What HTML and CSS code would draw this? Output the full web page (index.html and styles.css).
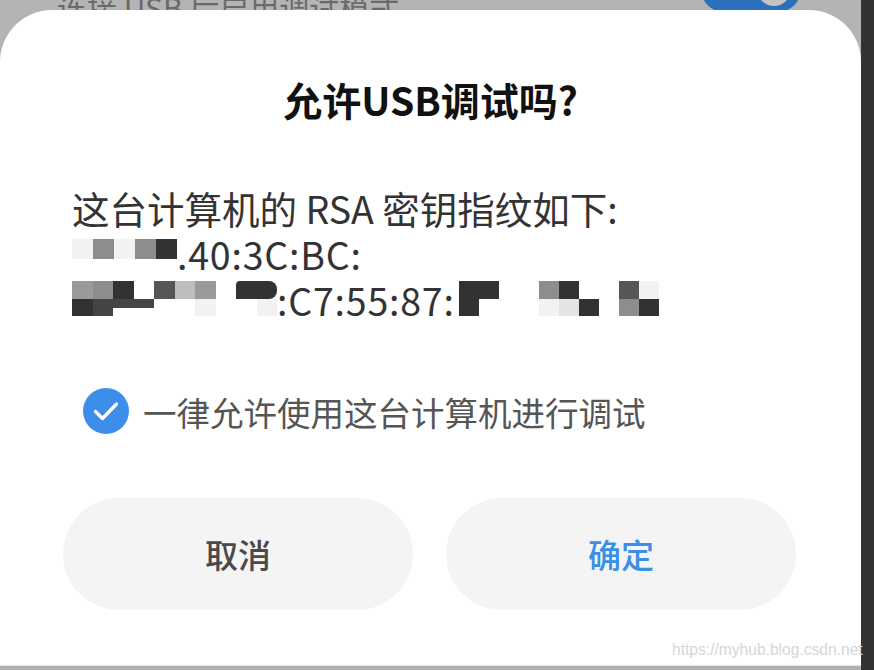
FILE: index.html
```html
<!DOCTYPE html>
<html lang="zh-CN">
<head>
    <meta charset="UTF-8">
    <meta name="viewport" content="width=device-width, initial-scale=1.0">
    <title>允许USB调试吗?</title>
    <link rel="stylesheet" href="styles.css">
</head>
<body>
    <div class="screen">
        <div class="main">
            <div class="behind">
                <span class="behind-text">连接 USB 后启用调试模式</span>
                <span class="toggle"><span class="knob"></span></span>
            </div>
            <div class="dialog">
                <h1 class="title">允许USB调试吗?</h1>
                <div class="message">
                    <p>这台计算机的 RSA 密钥指纹如下:</p>
                    <p><span class="mosaic short">
                        <i class="c1"></i><i class="c5"></i><i class="c1"></i><i class="c5"></i><i class="c9"></i>
                    </span><span class="hex">.40:3C:BC:</span></p>
                    <p><span class="mosaic wide">
                        <i class="c6"></i><i class="c5"></i><i class="c9"></i><i class="c0"></i><i class="c7"></i><i class="c3"></i><i class="c6"></i><i class="c0"></i><i class="c9 r"></i><i class="c9 r2"></i>
                        <i class="c9"></i><i class="c8"></i><i class="c8 half"></i><i class="c8 half"></i><i class="c0"></i><i class="c0"></i><i class="c1"></i><i class="c0"></i><i class="c0"></i><i class="c1"></i>
                    </span><span class="hex">:C7:55:87:</span><span class="mosaic wide after">
                        <i class="c9"></i><i class="c9"></i><i class="c0"></i><i class="c0"></i><i class="c5"></i><i class="c9"></i><i class="c0"></i><i class="c0"></i><i class="c7"></i><i class="c1"></i>
                        <i class="c9"></i><i class="c0"></i><i class="c0"></i><i class="c0"></i><i class="c1"></i><i class="c2"></i><i class="c9"></i><i class="c0"></i><i class="c5"></i><i class="c9"></i>
                    </span></p>
                </div>
                <label class="always">
                    <span class="check">
                        <svg width="48" height="48" viewBox="0 0 48 48">
                            <circle cx="24" cy="24" r="23" fill="#3b8eea"/>
                            <path d="M13.5 24.5 L20.5 31.5 L34.5 17" fill="none" stroke="#fff" stroke-width="3.4" stroke-linecap="round" stroke-linejoin="round"/>
                        </svg>
                    </span>
                    <span class="always-text">一律允许使用这台计算机进行调试</span>
                </label>
                <div class="buttons">
                    <button class="btn">取消</button>
                    <button class="btn primary">确定</button>
                </div>
            </div>
            <div class="bottom-bar"></div>
        </div>
        <div class="side"></div>
        <div class="watermark">https://myhub.blog.csdn.net</div>
    </div>
</body>
</html>
```

FILE: styles.css
```css
body {
    margin: 0;
    font-family: "Noto Sans CJK SC", "Noto Sans", sans-serif;
    background-color: #b4b4b4;
    overflow: hidden;
}
.screen {
    position: relative;
    display: flex;
    width: 874px;
    height: 670px;
}
.main {
    width: 861px;
    display: flex;
    flex-direction: column;
}
.side {
    width: 13px;
    background-color: #333;
}
.behind {
    height: 10px;
    overflow: hidden;
    display: flex;
    justify-content: space-between;
    padding: 0 60px 0 57px;
}
.behind-text {
    font-size: 30px;
    line-height: 30px;
    color: #6a6a6a;
    margin-top: -8px;
    white-space: nowrap;
}
.toggle {
    width: 100px;
    height: 46px;
    margin-top: -34px;
    border-radius: 23px;
    background-color: #2c6fbd;
    display: flex;
    justify-content: flex-end;
    align-items: center;
    padding-right: 10px;
    box-sizing: border-box;
}
.knob {
    width: 34px;
    height: 34px;
    border-radius: 50%;
    background-color: #c4c4c4;
}
.dialog {
    position: relative;
    height: 655px;
    box-sizing: border-box;
    background-color: #fff;
    border-radius: 52px 52px 0 0;
    padding: 64px 0 0 0;
}
.title {
    margin: 0;
    text-align: center;
    font-size: 39px;
    line-height: 50px;
    font-weight: 700;
    color: #111;
}
.message {
    margin-top: 61px;
    padding-left: 72px;
    font-size: 37.5px;
    line-height: 46px;
    color: #333;
}
.message p {
    margin: 0;
    height: 46px;
    white-space: nowrap;
}
.hex {
    letter-spacing: 0.8px;
}
.mosaic {
    display: inline-grid;
    vertical-align: top;
}
.short {
    grid-template-columns: repeat(5, 21px);
    grid-auto-rows: 20px;
    margin-top: 8px;
}
.wide {
    grid-template-columns: repeat(10, 20.5px);
    grid-auto-rows: 17.5px;
    margin-top: 4px;
}
.wide.after {
    grid-template-columns: repeat(10, 20px);
    margin-left: 4px;
}
.mosaic i {
    display: block;
}
.mosaic .r { border-radius: 4px 0 0 0; }
.mosaic .r2 { border-radius: 0 8px 8px 0; }
.mosaic .half { height: 9px; }
.c0 { background-color: #fff; }
.c1 { background-color: #f2f2f2; }
.c2 { background-color: #e4e4e4; }
.c3 { background-color: #bdbdbd; }
.c5 { background-color: #8d8d8d; }
.c6 { background-color: #9a9a9a; }
.c7 { background-color: #565656; }
.c8 { background-color: #444; }
.c9 { background-color: #323232; }
.always {
    display: flex;
    align-items: center;
    gap: 13px;
    margin-top: 64px;
    padding-left: 82px;
    height: 48px;
}
.check {
    display: flex;
}
.always-text {
    font-size: 33.5px;
    color: #555;
}
.buttons {
    display: flex;
    gap: 33px;
    margin-top: 63px;
    padding-left: 63px;
}
.btn {
    width: 350px;
    height: 112px;
    border: none;
    border-radius: 56px;
    background-color: #f4f4f4;
    font-family: inherit;
    font-size: 33px;
    font-weight: 500;
    color: #4a4a4a;
    padding: 0;
}
.btn.primary {
    color: #3b8fe6;
}
.bottom-bar {
    height: 5px;
    border-top: 1px solid #e6e6e6;
    box-sizing: border-box;
    background-color: #b0b0b0;
}
.watermark {
    position: absolute;
    left: 672px;
    top: 641px;
    font-family: "Liberation Sans", Arial, sans-serif;
    font-size: 15.6px;
    color: #d6d6d6;
    white-space: nowrap;
}
```
